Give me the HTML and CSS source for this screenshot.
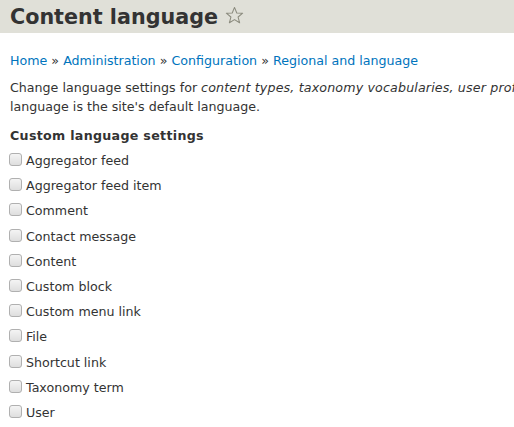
FILE: index.html
```html
<!DOCTYPE html>
<html>
<head>
<meta charset="utf-8">
<link rel="stylesheet" href="styles.css">
</head>
<body>
<header class="page-header">
  <h1 class="title">Content language</h1>
  <svg class="star" width="19" height="19" viewBox="0 0 20 20"><polygon points="10,1.5 12.4,7.3 18.6,7.6 13.8,11.6 15.4,17.7 10,14.3 4.6,17.7 6.2,11.6 1.4,7.6 7.6,7.3" fill="none" stroke="#8b8b7e" stroke-width="1.1" stroke-linejoin="round"/></svg>
</header>
<main class="content">
  <nav class="breadcrumb"><a href="#">Home</a> » <a href="#">Administration</a> » <a href="#">Configuration</a> » <a href="#">Regional and language</a></nav>
  <p class="desc">Change language settings for <em class="types">content types, taxonomy vocabularies, user profiles</em>, or any other supported element on your site. By default, language settings hide the language selector and the<br>language is the site's default language.</p>
  <h2 class="section">Custom language settings</h2>
  <ul class="checks">
    <li><label><span class="box"></span>Aggregator feed</label></li>
    <li><label><span class="box"></span>Aggregator feed item</label></li>
    <li><label><span class="box"></span>Comment</label></li>
    <li><label><span class="box"></span>Contact message</label></li>
    <li><label><span class="box"></span>Content</label></li>
    <li><label><span class="box"></span>Custom block</label></li>
    <li><label><span class="box"></span>Custom menu link</label></li>
    <li><label><span class="box"></span>File</label></li>
    <li><label><span class="box"></span>Shortcut link</label></li>
    <li><label><span class="box"></span>Taxonomy term</label></li>
    <li><label><span class="box"></span>User</label></li>
  </ul>
</main>
</body>
</html>
```
FILE: styles.css
```css
html, body {
  margin: 0;
  padding: 0;
  background: #fff;
  overflow: hidden;
}
body {
  font-family: "DejaVu Sans", sans-serif;
  color: #333;
  font-size: 12.65px;
}
.page-header {
  background: #e0e0d8;
  height: 33px;
  display: flex;
  align-items: center;
  padding-left: 10px;
  gap: 7px;
}
.title {
  margin: 0;
  font-size: 20.7px;
  font-weight: bold;
  color: #333;
  line-height: 26px;
  white-space: nowrap;
}
.star {
  margin-top: -2px;
}
.content {
  padding: 20px 10px 0 10px;
}
.breadcrumb {
  line-height: 16px;
  color: #333;
}
.breadcrumb a {
  color: #0074bd;
  text-decoration: none;
}
.desc {
  margin: 9px 0 0 0;
  line-height: 19px;
  white-space: nowrap;
}
.types {
  letter-spacing: 0.15px;
}
.section {
  margin: 12px 0 0 0;
  font-size: 12.65px;
  font-weight: bold;
  line-height: 16px;
  letter-spacing: 0.3px;
}
.checks {
  list-style: none;
  margin: 4px 0 0 0;
  padding: 0;
}
.checks li {
  height: 25.2px;
  display: flex;
  align-items: center;
}
.checks label {
  display: flex;
  align-items: center;
}
.box {
  width: 11px;
  height: 11px;
  border: 1px solid #b0b0b0;
  border-radius: 3px;
  background: linear-gradient(#f4f4f4, #dedede);
  margin-left: -1px;
  margin-right: 4px;
  margin-top: -2px;
}
```
